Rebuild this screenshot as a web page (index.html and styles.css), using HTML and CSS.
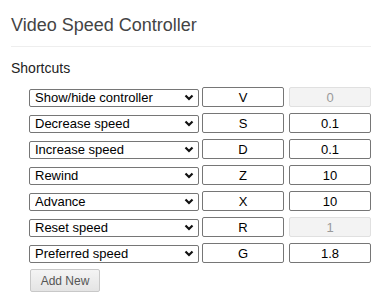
FILE: index.html
```html
<!DOCTYPE html>
<html>
<head>
<meta charset="utf-8">
<link rel="stylesheet" href="styles.css">
</head>
<body>
<h1 class="title">Video Speed Controller</h1>
<h3 class="section">Shortcuts</h3>
<div class="rows">
  <div class="row">
    <div class="select-wrap"><select class="action"><option>Show/hide controller</option></select><svg class="chev" viewBox="0 0 10 7" width="10" height="7"><path d="M1.5 1.5 L5 5 L8.5 1.5" fill="none" stroke="#111" stroke-width="2.2"/></svg></div>
    <input class="key" value="V">
    <input class="val" value="0" disabled>
  </div>
  <div class="row">
    <div class="select-wrap"><select class="action"><option>Decrease speed</option></select><svg class="chev" viewBox="0 0 10 7" width="10" height="7"><path d="M1.5 1.5 L5 5 L8.5 1.5" fill="none" stroke="#111" stroke-width="2.2"/></svg></div>
    <input class="key" value="S">
    <input class="val" value="0.1">
  </div>
  <div class="row">
    <div class="select-wrap"><select class="action"><option>Increase speed</option></select><svg class="chev" viewBox="0 0 10 7" width="10" height="7"><path d="M1.5 1.5 L5 5 L8.5 1.5" fill="none" stroke="#111" stroke-width="2.2"/></svg></div>
    <input class="key" value="D">
    <input class="val" value="0.1">
  </div>
  <div class="row">
    <div class="select-wrap"><select class="action"><option>Rewind</option></select><svg class="chev" viewBox="0 0 10 7" width="10" height="7"><path d="M1.5 1.5 L5 5 L8.5 1.5" fill="none" stroke="#111" stroke-width="2.2"/></svg></div>
    <input class="key" value="Z">
    <input class="val" value="10">
  </div>
  <div class="row">
    <div class="select-wrap"><select class="action"><option>Advance</option></select><svg class="chev" viewBox="0 0 10 7" width="10" height="7"><path d="M1.5 1.5 L5 5 L8.5 1.5" fill="none" stroke="#111" stroke-width="2.2"/></svg></div>
    <input class="key" value="X">
    <input class="val" value="10">
  </div>
  <div class="row">
    <div class="select-wrap"><select class="action"><option>Reset speed</option></select><svg class="chev" viewBox="0 0 10 7" width="10" height="7"><path d="M1.5 1.5 L5 5 L8.5 1.5" fill="none" stroke="#111" stroke-width="2.2"/></svg></div>
    <input class="key" value="R">
    <input class="val" value="1" disabled>
  </div>
  <div class="row">
    <div class="select-wrap"><select class="action"><option>Preferred speed</option></select><svg class="chev" viewBox="0 0 10 7" width="10" height="7"><path d="M1.5 1.5 L5 5 L8.5 1.5" fill="none" stroke="#111" stroke-width="2.2"/></svg></div>
    <input class="key" value="G">
    <input class="val" value="1.8">
  </div>
  <button class="add">Add New</button>
</div>
</body>
</html>
```

FILE: styles.css
```css
html, body {
  margin: 0;
  padding: 0;
  background: #fff;
}
body {
  padding: 0 9px 0 11px;
  font-family: "Liberation Sans", Arial, sans-serif;
  color: #222;
}
.title {
  margin: 0;
  padding: 14px 0 10px;
  font-size: 18px;
  line-height: 22px;
  font-weight: normal;
  color: #444;
  border-bottom: 1px solid #eee;
}
.section {
  margin: 0;
  padding-top: 13px;
  font-size: 14px;
  line-height: 16px;
  font-weight: normal;
  color: #222;
}
.rows {
  padding: 11px 0 0 18px;
  display: flex;
  flex-direction: column;
  gap: 6px;
  align-items: flex-start;
}
.row {
  display: flex;
  align-items: center;
  height: 20px;
}
.select-wrap {
  position: relative;
  width: 170px;
  height: 18px;
}
.action {
  appearance: none;
  -webkit-appearance: none;
  box-sizing: border-box;
  width: 170px;
  height: 18px;
  margin: 0;
  padding: 0 0 1px 5px;
  border: 1px solid #767676;
  border-radius: 2px;
  background: #fff;
  font-family: "Liberation Sans", Arial, sans-serif;
  font-size: 13px;
  line-height: 15px;
  color: #000;
}
.chev {
  position: absolute;
  right: 5px;
  top: 6px;
}
.key, .val {
  box-sizing: border-box;
  width: 82px;
  height: 20px;
  margin: 0 0 0 3px;
  padding: 0;
  border: 1px solid #767676;
  border-radius: 2px;
  background: #fff;
  font-family: "Liberation Sans", Arial, sans-serif;
  font-size: 13px;
  text-align: center;
  color: #000;
}
.val {
  margin-left: 5px;
}
.val:disabled {
  background: #f3f3f3;
  border-color: #e0e0e0;
  color: #9a9a9a;
}
.add {
  box-sizing: border-box;
  width: 70px;
  height: 23px;
  margin: 0 0 0 1px;
  padding: 0;
  border: 1px solid #c8c8c8;
  border-radius: 2px;
  background: linear-gradient(#f4f4f4, #e4e4e4);
  font-family: "Liberation Sans", Arial, sans-serif;
  font-size: 12px;
  color: #555;
}
```
